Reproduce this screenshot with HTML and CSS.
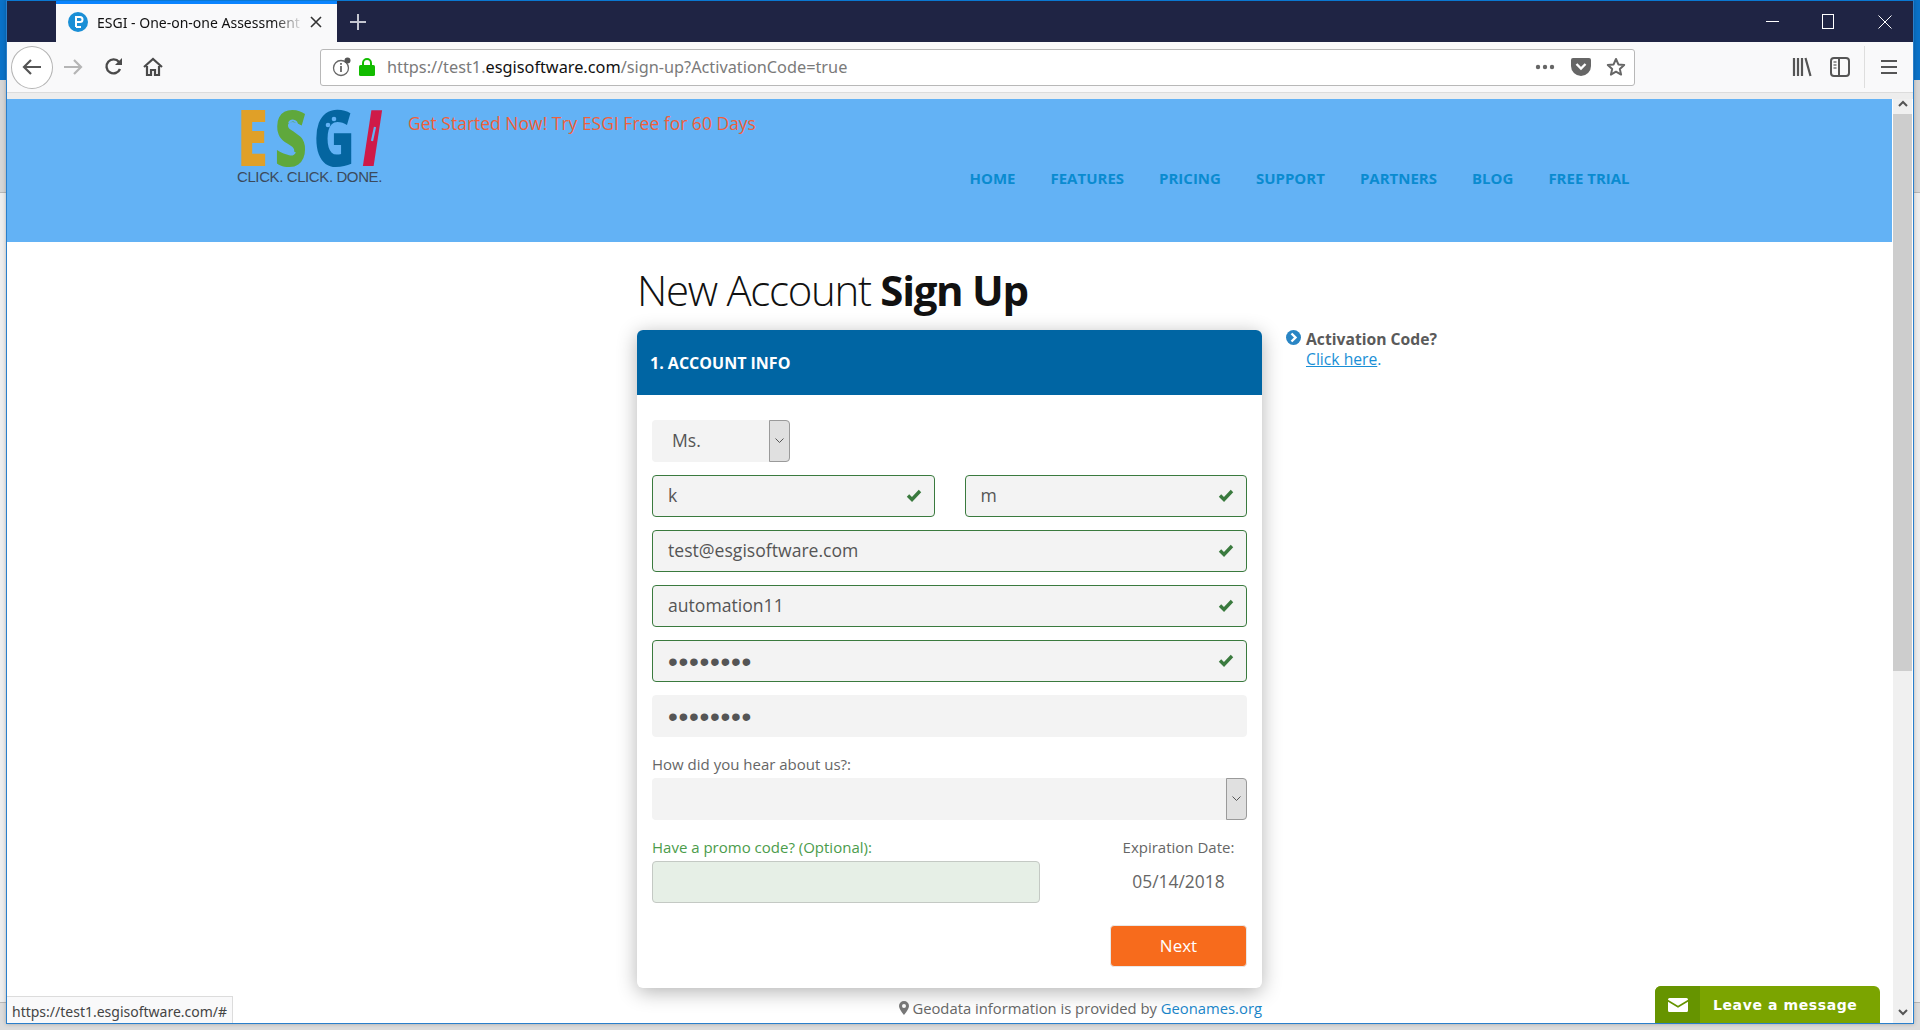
FILE: index.html
```html
<!DOCTYPE html>
<html lang="en">

<head>
    <meta charset="UTF-8">
    <title>ESGI - One-on-one Assessment</title>
    <link rel="stylesheet" href="styles.css">
</head>

<body>
    <div class="window">
        <!-- browser tabs -->
        <div class="titlebar">
            <div class="tab">
                <svg class="favicon" width="20" height="20" viewBox="0 0 20 20">
                    <circle cx="10" cy="10" r="10" fill="#1a8fd6"/>
                    <path d="M8 15V5h4a2.500 2.500 0 0 1 0 5H8M8 15h5" fill="none" stroke="#fff" stroke-width="2"/>
                </svg>
                <span class="tab-title">ESGI - One-on-one Assessment</span>
                <svg class="tab-close" width="12" height="12" viewBox="0 0 12 12">
                    <path d="M1 1l10 10M11 1L1 11" stroke="#333" stroke-width="1.6"/>
                </svg>
            </div>
            <svg class="new-tab" width="16" height="16" viewBox="0 0 16 16">
                <path d="M8 0v16M0 8h16" stroke="#c4c6d0" stroke-width="2"/>
            </svg>
            <div class="win-buttons">
                <svg width="13" height="13" viewBox="0 0 13 13"><path d="M0 6.500h13" stroke="#fff"/></svg>
                <svg width="13" height="15" viewBox="0 0 13 15"><rect x=".5" y=".5" width="11" height="14" fill="none" stroke="#fff"/></svg>
                <svg width="14" height="14" viewBox="0 0 14 14"><path d="M.5.500l13 13M13.500.500l-13 13" stroke="#fff"/></svg>
            </div>
        </div>

        <!-- browser toolbar -->
        <div class="toolbar">
            <button class="back-btn">
                <svg width="20" height="18" viewBox="0 0 20 18"><path d="M19 9H2M9 2L2 9l7 7" fill="none" stroke="#555" stroke-width="2.2"/></svg>
            </button>
            <svg class="tool-icon fwd" width="20" height="18" viewBox="0 0 20 18"><path d="M1 9h17M11 2l7 7-7 7" fill="none" stroke="#b5b5b5" stroke-width="2.2"/></svg>
            <svg class="tool-icon reload" width="20" height="20" viewBox="0 0 20 20"><path d="M16 12a7 7 0 1 1-1-7l2 2" fill="none" stroke="#4a4a4a" stroke-width="2.4"/><path d="M18 1v7h-7z" fill="#4a4a4a"/></svg>
            <svg class="tool-icon home" width="20" height="20" viewBox="0 0 20 20"><path d="M1 10l9-8 9 8M4 9v9h4v-5h4v5h4V9" fill="none" stroke="#4a4a4a" stroke-width="2.2"/></svg>
            <div class="urlbar">
                <svg class="url-info" width="20" height="20" viewBox="0 0 20 20">
                    <circle cx="9" cy="11" r="7.500" fill="none" stroke="#666" stroke-width="1.300"/>
                    <path d="M9 9v6M9 6v1.800" stroke="#666" stroke-width="1.800"/>
                    <circle cx="15.500" cy="3.500" r="3" fill="#555"/>
                </svg>
                <svg class="url-lock" width="16" height="18" viewBox="0 0 16 18">
                    <path d="M4 8V5a4 4 0 0 1 8 0v3" fill="none" stroke="#12bc00" stroke-width="2"/>
                    <rect x="0" y="7" width="16" height="11" rx="1.500" fill="#12bc00"/>
                </svg>
                <span class="url-text">https://test1.<b>esgisoftware.com</b>/sign-up?ActivationCode=true</span>
                <svg class="url-dots" width="20" height="6" viewBox="0 0 20 6"><circle cx="3" cy="3" r="2.200" fill="#666"/><circle cx="10" cy="3" r="2.200" fill="#666"/><circle cx="17" cy="3" r="2.200" fill="#666"/></svg>
                <svg class="url-pocket" width="20" height="18" viewBox="0 0 20 18"><path d="M0 2a2 2 0 0 1 2-2h16a2 2 0 0 1 2 2v6a10 10 0 0 1-20 0z" fill="#666"/><path d="M5.500 6L10 10.500 14.500 6" fill="none" stroke="#fff" stroke-width="2.400"/></svg>
                <svg class="url-star" width="20" height="20" viewBox="0 0 20 20"><path d="M10 2l2.400 5.400 5.800.6-4.400 3.900 1.300 5.700L10 14.700l-5.100 2.900 1.300-5.700L1.800 8l5.800-.6z" fill="none" stroke="#666" stroke-width="2" stroke-linejoin="round"/></svg>
            </div>
            <svg class="tool-icon library" width="20" height="20" viewBox="0 0 20 20"><path d="M2 1v18M6 1v18M10 1v18M13.500 1l5 18" fill="none" stroke="#555" stroke-width="2.200"/></svg>
            <svg class="tool-icon sidebar" width="20" height="20" viewBox="0 0 20 20"><rect x="1" y="1" width="18" height="18" rx="3" fill="none" stroke="#555" stroke-width="2"/><path d="M9 1v18" stroke="#555" stroke-width="2"/><path d="M3.500 5h3M3.500 8h3M3.500 11h3" stroke="#777" stroke-width="1.400"/></svg>
            <span class="tool-sep"></span>
            <svg class="tool-icon menu" width="16" height="16" viewBox="0 0 16 16"><path d="M0 2h16M0 8h16M0 14h16" stroke="#555" stroke-width="2"/></svg>
        </div>

        <div class="viewport">
            <div class="page">
                <header class="site-header">
                    <div class="logo">
                        <div class="logo-letters">
                            <span class="l-e">E</span><span class="l-s">S</span><span class="l-g">G</span><span class="l-i">I</span>
                        </div>
                        <svg class="logo-marks" width="144" height="56" viewBox="0 0 144 56">
                            <path d="M52 14c2-4 8-3 8 2 0 3-4 3-4 1" fill="none" stroke="#63b2f5" stroke-width="2"/>
                            <path d="M58 43c-2 4-8 3-8-1 0-3 3-3 4-1" fill="none" stroke="#63b2f5" stroke-width="2"/>
                            <circle cx="97" cy="10" r="2.300" fill="#63b2f5"/>
                            <circle cx="91" cy="16" r="2.300" fill="#63b2f5"/>
                            <path d="M138 18l-3 14" stroke="#63b2f5" stroke-width="2.200"/>
                        </svg>
                        <div class="logo-tag">CLICK. CLICK. DONE.</div>
                    </div>
                    <p class="promo">Get Started Now! Try ESGI Free for 60 Days</p>
                    <nav class="site-nav">
                        <a href="#">HOME</a>
                        <a href="#">FEATURES</a>
                        <a href="#">PRICING</a>
                        <a href="#">SUPPORT</a>
                        <a href="#">PARTNERS</a>
                        <a href="#">BLOG</a>
                        <a href="#">FREE TRIAL</a>
                    </nav>
                </header>

                <main class="signup">
                    <div class="signup-main">
                        <h1>New Account <b>Sign Up</b></h1>
                        <form class="card">
                            <h2>1. ACCOUNT INFO</h2>
                            <div class="card-body">
                                <div class="select select-title">
                                    <span class="select-value">Ms.</span>
                                    <span class="select-arrow"><svg width="9" height="6" viewBox="0 0 9 6"><path d="M.5.500l4 4 4-4" fill="none" stroke="#555"/></svg></span>
                                </div>
                                <div class="name-row">
                                    <div class="field valid">
                                        <input type="text" value="k">
                                        <svg class="check" width="16" height="13" viewBox="0 0 16 13"><path d="M2 6.500l4 4 8-8.500" fill="none" stroke="#3a7a3e" stroke-width="3.400"/></svg>
                                    </div>
                                    <div class="field valid">
                                        <input type="text" value="m">
                                        <svg class="check" width="16" height="13" viewBox="0 0 16 13"><path d="M2 6.500l4 4 8-8.500" fill="none" stroke="#3a7a3e" stroke-width="3.400"/></svg>
                                    </div>
                                </div>
                                <div class="field valid">
                                    <input type="text" value="test@esgisoftware.com">
                                    <svg class="check" width="16" height="13" viewBox="0 0 16 13"><path d="M2 6.500l4 4 8-8.500" fill="none" stroke="#3a7a3e" stroke-width="3.400"/></svg>
                                </div>
                                <div class="field valid">
                                    <input type="text" value="automation11">
                                    <svg class="check" width="16" height="13" viewBox="0 0 16 13"><path d="M2 6.500l4 4 8-8.500" fill="none" stroke="#3a7a3e" stroke-width="3.400"/></svg>
                                </div>
                                <div class="field valid">
                                    <input type="password" value="password">
                                    <svg class="check" width="16" height="13" viewBox="0 0 16 13"><path d="M2 6.500l4 4 8-8.500" fill="none" stroke="#3a7a3e" stroke-width="3.400"/></svg>
                                </div>
                                <div class="field">
                                    <input type="password" value="password">
                                </div>
                                <div class="hear">
                                    <label>How did you hear about us?:</label>
                                    <div class="select">
                                        <span class="select-value"></span>
                                        <span class="select-arrow"><svg width="9" height="6" viewBox="0 0 9 6"><path d="M.5.500l4 4 4-4" fill="none" stroke="#555"/></svg></span>
                                    </div>
                                </div>
                                <div class="promo-row">
                                    <div class="promo-code">
                                        <label class="label-green">Have a promo code? (Optional):</label>
                                        <input type="text" class="promo-input">
                                    </div>
                                    <div class="expiry">
                                        <label>Expiration Date:</label>
                                        <span class="expiry-date">05/14/2018</span>
                                    </div>
                                </div>
                                <div class="actions">
                                    <button type="button" class="next-btn">Next</button>
                                </div>
                            </div>
                        </form>
                        <p class="geodata">
                            <svg class="geo-pin" width="10" height="14" viewBox="0 0 10 14"><path fill-rule="evenodd" d="M5 0a5 5 0 0 1 5 5c0 3-5 9-5 9S0 8 0 5a5 5 0 0 1 5-5zm0 3a2 2 0 1 0 0 4 2 2 0 0 0 0-4z" fill="#777"/></svg>
                            Geodata information is provided by <a href="#">Geonames.org</a>
                        </p>
                    </div>
                    <aside class="activation">
                        <svg class="activation-icon" width="15" height="15" viewBox="0 0 15 15"><circle cx="7.500" cy="7.500" r="7.500" fill="#2a85c4"/><path d="M5.500 3.500l4 4-4 4" fill="none" stroke="#fff" stroke-width="2.400"/></svg>
                        <div>
                            <b>Activation Code?</b><br>
                            <a href="#">Click here</a><span class="dot">.</span>
                        </div>
                    </aside>
                </main>
            </div>

            <div class="scrollbar">
                <span class="scroll-btn"><svg width="10" height="7" viewBox="0 0 10 7"><path d="M1 6l4-4 4 4" fill="none" stroke="#555" stroke-width="2"/></svg></span>
                <span class="scroll-thumb"></span>
                <span class="scroll-track"></span>
                <span class="scroll-btn"><svg width="10" height="7" viewBox="0 0 10 7"><path d="M1 1l4 4 4-4" fill="none" stroke="#555" stroke-width="2"/></svg></span>
            </div>

            <div class="status-url">https://test1.esgisoftware.com/#</div>

            <div class="chat-tab">
                <span class="chat-icon">
                    <svg width="20" height="14" viewBox="0 0 20 14"><path d="M1.500 0h17A1.500 1.500 0 0 1 20 1.500v.3l-10 6-10-6v-.3A1.500 1.500 0 0 1 1.500 0zM0 3.800l10 6 10-6v8.700a1.500 1.500 0 0 1-1.500 1.500h-17A1.500 1.500 0 0 1 0 12.500z" fill="#fff"/></svg>
                </span>
                <span class="chat-text">Leave a message</span>
            </div>
        </div>
    </div>
</body>

</html>
```

FILE: styles.css
```css
/* Desktop behind the browser window */
html, body {
    height: 100%;
}

body {
    margin: 0;
    height: 1030px;
    overflow: hidden;
    font-family: "Open Sans", sans-serif;
    background: linear-gradient(#0a72c8 0, #0a72c8 80px, #d6d6d6 80px, #d6d6d6 192px, #b8b8b8 192px, #b8b8b8 193px, #eeeeee 193px, #eeeeee 1002px, #b8b8b8 1002px, #b8b8b8 1003px, #dcdcdc 1003px);
}

svg {
    display: block;
    flex-shrink: 0;
}

/* Browser window */
.window {
    margin-left: 6px;
    width: 1906px;
    height: 1022px;
    border: 1px solid #2a7fcb;
    border-top-color: #0a78d2;
    display: flex;
    flex-direction: column;
    box-shadow: 0 0 4px rgba(0, 0, 0, 0.25);
}

.titlebar {
    height: 41px;
    background-color: #1f2444;
    display: flex;
    align-items: center;
    flex-shrink: 0;
}

.tab {
    margin-left: 49px;
    width: 281px;
    height: 41px;
    box-sizing: border-box;
    background-color: #f9f9fa;
    border-top: 3px solid #0a84ff;
    display: flex;
    align-items: center;
    padding-left: 12px;
    padding-bottom: 2px;
    font-family: "Noto Sans", sans-serif;
    font-size: 14px;
    color: #111;
}

.tab-title {
    margin-left: 9px;
    width: 207px;
    white-space: nowrap;
    -webkit-mask-image: linear-gradient(90deg, #000 85%, transparent);
    mask-image: linear-gradient(90deg, #000 85%, transparent);
}

.tab-close {
    margin-left: 6px;
}

.new-tab {
    margin-left: 13px;
}

.win-buttons {
    margin-left: auto;
    display: flex;
    align-items: center;
    gap: 43px;
    padding-right: 21px;
}

.toolbar {
    height: 50px;
    background-color: #f9f9fa;
    border-bottom: 1px solid #dcdcdc;
    display: flex;
    align-items: center;
    flex-shrink: 0;
}

.back-btn {
    margin-left: 4px;
    width: 42px;
    height: 43px;
    border: 1px solid #b4b4b4;
    border-radius: 50%;
    background-color: #fff;
    padding: 0;
    display: flex;
    align-items: center;
    justify-content: center;
}

.fwd {
    margin-left: 10px;
}

.reload {
    margin-left: 21px;
}

.home {
    margin-left: 19px;
}

.urlbar {
    margin-left: 157px;
    width: 1315px;
    height: 37px;
    box-sizing: border-box;
    background-color: #fff;
    border: 1px solid #b8b8b8;
    border-radius: 3px;
    display: flex;
    align-items: center;
    padding-left: 11px;
    font-family: "Noto Sans", sans-serif;
    font-size: 16.300px;
    color: #7a7a7a;
}

.url-lock {
    margin-left: 7px;
}

.url-text {
    margin-left: 12px;
    white-space: nowrap;
}

.url-text b {
    font-weight: 400;
    color: #111;
}

.url-dots {
    margin-left: auto;
}

.url-pocket {
    margin-left: 16px;
}

.url-star {
    margin-left: 15px;
    margin-right: 8px;
}

.library {
    margin-left: 157px;
}

.sidebar {
    margin-left: 18px;
}

.tool-sep {
    margin-left: 14px;
    width: 1px;
    height: 42px;
    background-color: #dedede;
}

.menu {
    margin-left: 16px;
}

/* Page area */
.viewport {
    flex: 1;
    min-height: 0;
    position: relative;
    display: flex;
    background-color: #fff;
    border-top: 6px solid #ededed;
    overflow: hidden;
}

.page {
    flex: 1;
    min-width: 0;
}

.scrollbar {
    width: 19px;
    margin-top: -6px;
    border-left: 1px solid #fff;
    border-right: 1px solid #fff;
    display: flex;
    flex-direction: column;
    background-color: #f0f0f0;
}

.scroll-btn {
    height: 21px;
    display: flex;
    align-items: center;
    justify-content: center;
    background-color: #f0f0f0;
}

.scroll-thumb {
    height: 557px;
    background-color: #cdcdcd;
}

.scroll-track {
    flex: 1;
}

/* Site header */
.site-header {
    height: 143px;
    background-color: #63b2f5;
    display: flex;
    position: relative;
}

.logo {
    margin-left: 230px;
    padding-top: 8px;
    width: 145px;
    position: relative;
}

.logo-letters {
    height: 60px;
    width: 201px;
    display: flex;
    justify-content: space-between;
    transform: scaleX(0.72);
    transform-origin: left top;
    font-weight: 800;
    font-size: 78px;
    line-height: 58px;
}

.l-e {
    color: #e0a028;
}

.l-s {
    color: #5fa83c;
}

.l-g {
    color: #0465a0;
}

.l-i {
    color: #cf1a48;
    font-style: italic;
}

.logo-marks {
    position: absolute;
    left: 0;
    top: 10px;
}

.logo-tag {
    font-family: "Liberation Sans", sans-serif;
    font-size: 15px;
    letter-spacing: -0.4px;
    color: #3b4a5c;
    line-height: 16px;
    margin-top: 2px;
    white-space: nowrap;
}

.promo {
    margin: 12px 0 0 26px;
    font-size: 17.500px;
    line-height: 24px;
    color: #f0603a;
    white-space: nowrap;
}

.site-nav {
    position: absolute;
    left: 962.500px;
    top: 69px;
    display: flex;
    gap: 35px;
}

.site-nav a {
    font-size: 15px;
    font-weight: 700;
    line-height: 20px;
    color: #0a8bd0;
    text-decoration: none;
    white-space: nowrap;
}

/* Sign up form */
.signup {
    display: flex;
    align-items: flex-start;
    margin-left: 630px;
}

.signup-main {
    width: 625px;
}

h1 {
    margin: 0;
    height: 88px;
    font-size: 42px;
    font-weight: 300;
    line-height: 95px;
    letter-spacing: -1.300px;
    color: #111;
    white-space: nowrap;
}

h1 b {
    font-weight: 700;
}

.card {
    display: block;
    background-color: #fff;
    border-radius: 6px;
    box-shadow: 0 4px 20px rgba(0, 0, 0, 0.3);
}

h2 {
    margin: 0;
    height: 65px;
    padding-left: 13px;
    background-color: #0065a3;
    border-radius: 6px 6px 0 0;
    color: #fff;
    font-size: 16px;
    font-weight: 700;
    line-height: 66px;
}

.card-body {
    padding: 25px 15px 21px;
    display: flex;
    flex-direction: column;
    gap: 13px;
}

.name-row {
    display: flex;
    gap: 30px;
}

.name-row .field {
    flex: 1;
}

.field {
    height: 42px;
    box-sizing: border-box;
    background-color: #f3f3f3;
    border: 1px solid #f3f3f3;
    border-radius: 4px;
    display: flex;
    align-items: center;
    padding: 0 12px 0 15px;
}

.field.valid {
    border-color: #3a7a3e;
}

.check {
    margin-top: -1px;
}

.field input {
    flex: 1;
    min-width: 0;
    border: none;
    outline: none;
    padding: 0 0 2px;
    background: transparent;
    font-family: "Open Sans", sans-serif;
    font-size: 17.600px;
    color: #555;
}

.field input[type="password"] {
    font-family: "Liberation Sans", sans-serif;
    font-size: 28px;
    letter-spacing: 0.700px;
    height: 38px;
    padding: 2px 0 0;
}

.select {
    height: 42px;
    background-color: #f3f3f3;
    border-radius: 4px;
    display: flex;
    font-size: 17.600px;
    color: #555;
}

.select-title {
    width: 138px;
}

.select-value {
    flex: 1;
    padding-left: 20px;
    line-height: 40px;
}

.select-arrow {
    width: 21px;
    box-sizing: border-box;
    background-color: #e0e0e0;
    border: 1px solid #9a9a9a;
    border-radius: 0 4px 4px 0;
    display: flex;
    align-items: center;
    justify-content: center;
}

label {
    display: block;
    font-size: 15px;
    line-height: 20px;
    color: #666;
    margin-bottom: 4px;
}

.hear {
    margin-top: 4px;
}

.promo-row {
    display: flex;
    margin-top: 4px;
}

.promo-code {
    width: 388px;
}

.label-green {
    color: #4b9c4b;
}

.promo-input {
    display: block;
    width: 100%;
    height: 42px;
    box-sizing: border-box;
    background-color: #e6efe6;
    border: 1px solid #c4c9c4;
    border-radius: 4px;
    outline: none;
}

.expiry {
    margin-left: auto;
    width: 137px;
    text-align: center;
}

.expiry-date {
    display: block;
    font-size: 17.400px;
    line-height: 40px;
    color: #666;
}

.actions {
    display: flex;
    justify-content: flex-end;
    margin-top: 9px;
}

.next-btn {
    width: 137px;
    height: 42px;
    padding-bottom: 2px;
    background-color: #f76b1c;
    border: 1px solid #e8e8e8;
    border-radius: 4px;
    color: #fff;
    font-family: "Open Sans", sans-serif;
    font-size: 17px;
}

.geodata {
    margin: 10px 0 0;
    text-align: right;
    font-size: 14.800px;
    line-height: 20px;
    color: #666;
    white-space: nowrap;
}

.geo-pin {
    display: inline-block;
    vertical-align: -1px;
}

.geodata a {
    color: #1a85c8;
    text-decoration: none;
}

/* Activation code note */
.activation {
    margin: 87px 0 0 24px;
    display: flex;
    gap: 5px;
    font-size: 15.700px;
    line-height: 20px;
    color: #5a5a5a;
}

.activation-icon {
    margin-top: 1px;
}

.activation a {
    color: #1a8fd6;
}

.dot {
    color: #1a8fd6;
}

/* Link preview shown at the bottom of the window */
.status-url {
    position: absolute;
    left: 0;
    bottom: 0;
    height: 26px;
    padding: 0 5px;
    background-color: #f9f9fa;
    border: 1px solid #dcdcdc;
    border-width: 1px 1px 0 0;
    font-family: "Noto Sans", sans-serif;
    font-size: 14px;
    line-height: 30px;
    color: #444;
}

/* Chat tab */
.chat-tab {
    position: absolute;
    left: 1648px;
    bottom: 0;
    width: 225px;
    height: 37px;
    background-color: #7ba400;
    border-radius: 6px 6px 0 0;
    display: flex;
    overflow: hidden;
    color: #fff;
}

.chat-icon {
    width: 45px;
    background-color: #669400;
    display: flex;
    align-items: center;
    justify-content: center;
}

.chat-text {
    margin-left: 13px;
    font-family: "DejaVu Sans", sans-serif;
    font-size: 14px;
    letter-spacing: 0.600px;
    font-weight: 700;
    line-height: 39px;
    white-space: nowrap;
}
```
